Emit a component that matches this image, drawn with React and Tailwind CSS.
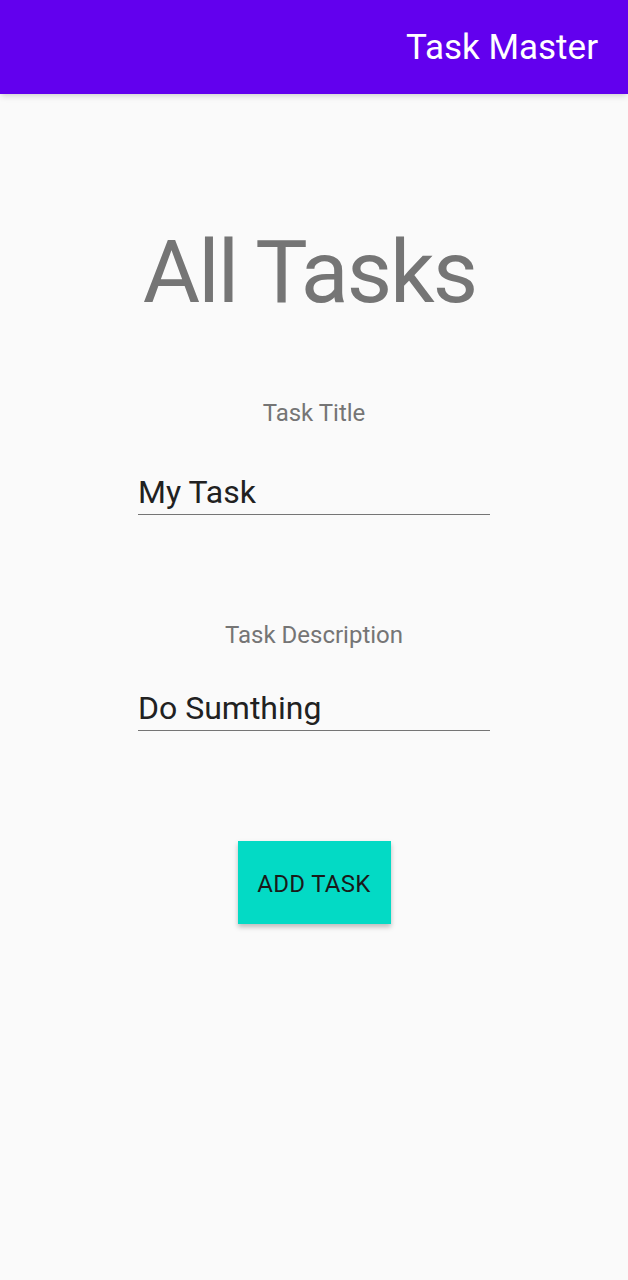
import React from 'react';

const Field = ({ label, value, gap }) => {
  return (
    <div className="flex flex-col items-center w-[352px]">
      <p className="text-[24px] leading-none text-[#757575]">{label}</p>
      <div className={`w-full ${gap} border-b-[1.5px] border-[#757575] pb-[6px]`}>
        <span className="block text-[32px] leading-none text-[#212121]">{value}</span>
      </div>
    </div>
  );
};

const App = () => {
  return (
    <div className="min-h-[1280px] bg-[#fafafa] flex flex-col" style={{ fontFamily: 'Roboto, "Noto Sans", sans-serif' }}>
      <header className="h-[94px] bg-[#6200ee] flex items-center justify-end px-[30px] shadow-md">
        <h1 className="text-white text-[35px] leading-none">Task Master</h1>
      </header>

      <main className="flex flex-col items-center">
        <h2 className="mt-[134px] mr-[9px] text-[88px] leading-none tracking-[-2px] text-[#757575]">All Tasks</h2>

        <div className="mt-[85px]">
          <Field label="Task Title" value="My Task" gap="mt-[51px]" />
        </div>
        <div className="mt-[108px]">
          <Field label="Task Description" value="Do Sumthing" gap="mt-[45px]" />
        </div>

        <button className="mt-[110px] w-[153px] h-[83px] bg-[#03dac5] text-[24px] tracking-[0.3px] text-[#1a1a1a] pt-[3px] shadow-[0_3px_5px_rgba(0,0,0,0.25)]">
          ADD TASK
        </button>
      </main>
    </div>
  );
};

export default App;
